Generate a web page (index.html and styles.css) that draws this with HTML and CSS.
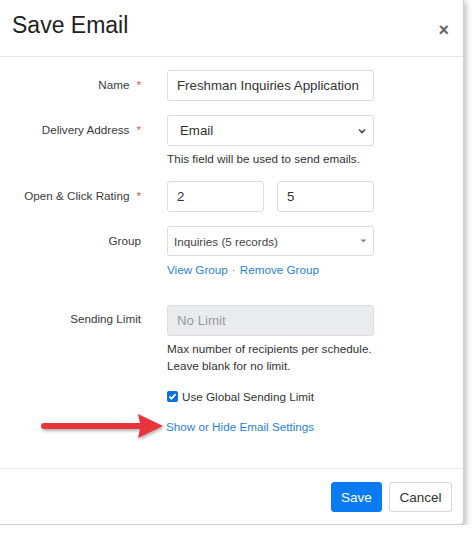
FILE: index.html
```html
<!DOCTYPE html>
<html>
<head>
<meta charset="utf-8">
<link rel="stylesheet" href="styles.css">
</head>
<body>
<div class="modal">
  <div class="modal-header">
    <h1 class="modal-title">Save Email</h1>
    <span class="close">&times;</span>
  </div>
  <div class="modal-body">
    <div class="row row-gap">
      <div class="label">Name<span class="req">*</span></div>
      <div class="ctrl">
        <div class="input">Freshman Inquiries Application</div>
      </div>
    </div>
    <div class="row row-gap">
      <div class="label">Delivery Address<span class="req">*</span></div>
      <div class="ctrl">
        <div class="input select"><span class="sel-text">Email</span>
          <svg class="chev" width="8" height="6" viewBox="0 0 8 6"><path d="M1 1.5 L4 4.5 L7 1.5" fill="none" stroke="#444" stroke-width="1.6"/></svg>
        </div>
        <div class="help">This field will be used to send emails.</div>
      </div>
    </div>
    <div class="row row-gap">
      <div class="label">Open &amp; Click Rating<span class="req">*</span></div>
      <div class="ctrl pair">
        <div class="input">2</div>
        <div class="input">5</div>
      </div>
    </div>
    <div class="row row-gap-lg">
      <div class="label">Group</div>
      <div class="ctrl">
        <div class="input select2"><span>Inquiries (5 records)</span>
          <svg class="tri" width="7" height="4" viewBox="0 0 7 4"><path d="M0.5 0.5 L6.5 0.5 L3.5 3.5 Z" fill="#888"/></svg>
        </div>
        <div class="links"><a>View Group</a><span class="dot">·</span><a>Remove Group</a></div>
      </div>
    </div>
    <div class="row">
      <div class="label label-sm">Sending Limit</div>
      <div class="ctrl">
        <div class="input disabled">No Limit</div>
        <div class="help">Max number of recipients per schedule.<br>Leave blank for no limit.</div>
        <div class="check-row">
          <svg class="check" width="11" height="11" viewBox="0 0 11 11"><rect x="0" y="0" width="11" height="11" rx="2" fill="#0b6fe0"/><path d="M2.4 5.6 L4.5 7.7 L8.6 3.2" fill="none" stroke="#fff" stroke-width="1.8"/></svg>
          <span>Use Global Sending Limit</span>
        </div>
      </div>
    </div>
    <div class="row arrow-row">
      <div class="label arrow-cell">
        <svg class="arrow" width="128" height="30" viewBox="0 0 128 30">
          <path d="M5 11 L101 11 L99 2 L124 14 L99 26 L101 17 L5 17 Q2 17 2 14 Q2 11 5 11 Z" fill="#e8353b"/>
        </svg>
      </div>
      <div class="ctrl">
        <a class="toggle">Show or Hide Email Settings</a>
      </div>
    </div>
  </div>
  <div class="modal-footer">
    <button class="btn btn-primary">Save</button>
    <button class="btn btn-default">Cancel</button>
  </div>
</div>
</body>
</html>
```

FILE: styles.css
```css
html, body {
  margin: 0;
  padding: 0;
  background: #fff;
}
body {
  font-family: "Liberation Sans", Arial, sans-serif;
  color: #333;
}
.modal {
  width: 463px;
  margin: -1px 0 0 -1px;
  border: 1px solid #cfcfcf;
  border-radius: 0 0 4px 0;
  background: #fff;
  box-shadow: 2px 3px 6px rgba(0, 0, 0, 0.28);
}
.modal-header {
  height: 57px;
  border-bottom: 1px solid #e6e6e6;
  display: flex;
  align-items: center;
  justify-content: space-between;
  padding: 0 14px 0 12px;
  box-sizing: border-box;
}
.modal-title {
  margin: 0 0 6px 0;
  font-size: 23px;
  font-weight: normal;
  color: #222;
  line-height: 1;
}
.close {
  font-size: 18px;
  font-weight: bold;
  color: #666;
  line-height: 1;
  margin-top: 3px;
}
.modal-body {
  padding: 13px 0 33px 0;
}
.row {
  display: flex;
  align-items: flex-start;
}
.row-gap {
  margin-bottom: 14px;
}
.row-gap-lg {
  margin-bottom: 27px;
}
.label {
  width: 167px;
  box-sizing: border-box;
  padding: 6px 26px 0 0;
  text-align: right;
  font-size: 11.7px;
  line-height: 17px;
  color: #3a3a3a;
}
.label-sm {
  padding-top: 5px;
}
.req {
  color: #d9534f;
  margin-left: 7px;
}
.ctrl {
  width: 207px;
}
.input {
  height: 31px;
  box-sizing: border-box;
  border: 1px solid #dcdcdc;
  border-radius: 3px;
  padding: 0 9px;
  display: flex;
  align-items: center;
  font-size: 13.3px;
  color: #333;
  background: #fff;
}
.select {
  justify-content: space-between;
  padding: 0 7px 0 12px;
}
.chev {
  margin-top: 1px;
}
.pair {
  display: flex;
  gap: 13px;
}
.pair .input {
  flex: 1;
}
.select2 {
  height: 30px;
  font-size: 11.7px;
  padding: 0 6px 0 6px;
  justify-content: space-between;
  color: #444;
}
.help {
  margin-top: 4px;
  font-size: 11.7px;
  line-height: 17px;
  color: #333;
}
.links {
  margin-top: 5px;
  font-size: 11.7px;
  line-height: 17px;
  color: #2c7fd6;
}
.dot {
  margin: 0 4px;
  color: #888;
}
.disabled {
  background: #e9ecef;
  color: #9a9a9a;
}
.check-row {
  margin-top: 14px;
  display: flex;
  align-items: center;
  font-size: 11.7px;
  line-height: 17px;
  color: #333;
}
.check {
  margin-right: 4px;
  margin-top: -1px;
}
.arrow-row {
  margin-top: 13px;
}
.arrow-cell {
  padding: 0;
  height: 17px;
  position: relative;
}
.arrow {
  position: absolute;
  left: 39px;
  top: -6px;
  filter: drop-shadow(1px 2px 1.5px rgba(0, 0, 0, 0.3));
}
.toggle {
  display: block;
  margin-left: -1px;
  font-size: 11.7px;
  line-height: 17px;
  color: #2c7fd6;
}
.modal-footer {
  border-top: 1px solid #e6e6e6;
  padding: 13px 11px 12px 0;
  display: flex;
  justify-content: flex-end;
  gap: 7px;
}
.btn {
  height: 30px;
  border-radius: 3px;
  font-family: "Liberation Sans", Arial, sans-serif;
  font-size: 13.5px;
  padding: 0;
  margin: 0;
}
.btn-primary {
  width: 51px;
  background: #0b7bf4;
  border: 1px solid #0b7bf4;
  color: #fff;
}
.btn-default {
  width: 63px;
  background: #fff;
  border: 1px solid #d6d6d6;
  color: #333;
}
```
